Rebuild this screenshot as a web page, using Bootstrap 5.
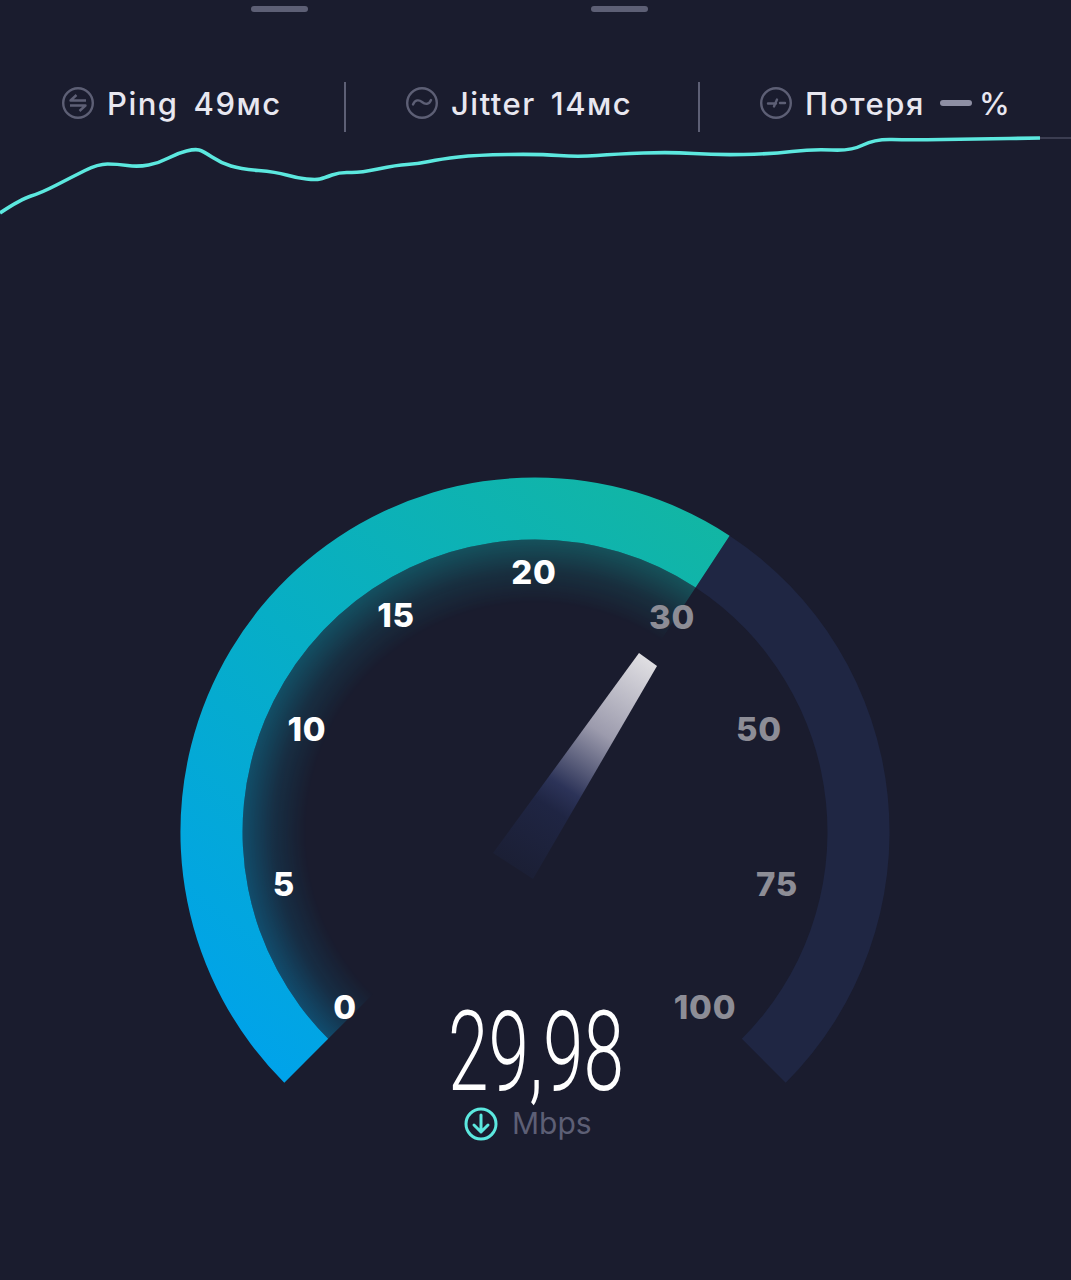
<!DOCTYPE html>
<html lang="ru">
<head>
    <meta charset="UTF-8">
    <meta name="viewport" content="width=device-width, initial-scale=1.0">
    <title>Speedtest</title>
    <link rel="stylesheet" href="https://cdn.jsdelivr.net/npm/bootstrap@5.3.0/dist/css/bootstrap.min.css">
    <style>
        html, body { background-color: #1a1c2e; height: 100%; }
        body { font-family: Inter, "Noto Sans", sans-serif; overflow: hidden; }
        .tela { width: 1071px; height: 1280px; background-color: #1a1c2e; }
        .alcas { padding: 6px 0 0 251px; gap: 283px; }
        .alca { width: 57px; height: 6px; border-radius: 3px; background-color: #5d5f75; }
        .stats { display: grid; grid-template-columns: 346px 354px 1fr; margin-top: 70px; height: 50px; }
        .stat { padding: 0 0 8px 62px; color: #e8e7f0; font-size: 31px; font-weight: 500; letter-spacing: 1.5px; line-height: 1; }
        .stat + .stat { padding-left: 60px; }
        .stat-div { border-right: 2px solid #5d5f75; }
        .stat svg { width: 32px; height: 32px; margin-right: 13px; flex: none; }
        .stat-val { margin-left: 15px; }
        .traco { width: 32px; height: 6px; border-radius: 3px; background-color: #8e8fa4; margin: 0 7px 0 15px; }
        .grafico { display: block; margin-top: -132px; }
        .medidor { display: block; }
        .num { font-family: Inter, sans-serif; font-size: 33px; font-weight: 800; letter-spacing: 0.8px; text-anchor: middle; }
        .num-on { fill: #ffffff; }
        .num-off { fill: #8d8d96; }
        .valor { font-family: Roboto, sans-serif; font-weight: 300; font-size: 112px; fill: #ffffff; }
        .unidade { font-family: Inter, sans-serif; font-size: 30px; fill: #5d5f75; }
    </style>
</head>
<body>
    <div class="tela position-relative">
        <div class="alcas d-flex">
            <div class="alca"></div>
            <div class="alca"></div>
        </div>

        <div class="stats">
            <div class="stat stat-div d-flex align-items-center">
                <svg viewBox="0 0 32 32" fill="none" stroke="#5d5f75" stroke-width="2.4">
                    <circle cx="16" cy="16" r="14.8"/>
                    <path d="M24 13.5H8.5l6-5.5M8 18.5h15.5l-6 5.5" stroke-linejoin="round"/>
                </svg>
                <span>Ping</span><span class="stat-val">49мс</span>
            </div>
            <div class="stat stat-div d-flex align-items-center">
                <svg viewBox="0 0 32 32" fill="none" stroke="#5d5f75" stroke-width="2.4">
                    <circle cx="16" cy="16" r="14.8"/>
                    <path d="M7 17.5c2-5 6-5 9-2.5s7 3 9-2" stroke-linecap="round"/>
                </svg>
                <span>Jitter</span><span class="stat-val">14мс</span>
            </div>
            <div class="stat d-flex align-items-center">
                <svg viewBox="0 0 32 32" fill="none" stroke="#5d5f75" stroke-width="2.4">
                    <circle cx="16" cy="16" r="14.8"/>
                    <path d="M8 16.5h8M17 12.5l-3 7M20 16h5" stroke-linecap="round"/>
                </svg>
                <span>Потеря</span><span class="traco"></span><span>%</span>
            </div>
        </div>

        <svg class="grafico" width="1071" height="240" viewBox="0 0 1071 240" fill="none">
            <path d="M1040 138H1071" stroke="#5d5f75" stroke-width="1"/>
            <path id="linhaGrafico" stroke="#5ce8df" stroke-width="3.6" stroke-linejoin="round"/>
        </svg>

        <svg class="medidor" width="1071" height="1040" viewBox="0 240 1071 1040">
            <defs>
                <linearGradient id="corArco" gradientUnits="userSpaceOnUse" x1="286" y1="1082" x2="730" y2="535">
                    <stop offset="0" stop-color="#00a3ea"/>
                    <stop offset="0.5" stop-color="#07aec6"/>
                    <stop offset="1" stop-color="#12b6a4"/>
                </linearGradient>
                <radialGradient id="brilho" gradientUnits="userSpaceOnUse" cx="535" cy="832" r="293">
                    <stop offset="0.78" stop-color="#fff" stop-opacity="0"/>
                    <stop offset="0.89" stop-color="#fff" stop-opacity="0.13"/>
                    <stop offset="1" stop-color="#fff" stop-opacity="0.36"/>
                </radialGradient>
                <mask id="mascaraBrilho" maskUnits="userSpaceOnUse" x="0" y="240" width="1071" height="1040">
                    <circle cx="535" cy="832" r="293" fill="url(#brilho)"/>
                </mask>
                <linearGradient id="corPonteiro" gradientUnits="userSpaceOnUse" x1="648" y1="660" x2="513" y2="866">
                    <stop offset="0" stop-color="#dfdee2"/>
                    <stop offset="0.35" stop-color="#9c9bad"/>
                    <stop offset="0.62" stop-color="#2c3358"/>
                    <stop offset="0.72" stop-color="#1f2543"/>
                    <stop offset="1" stop-color="#1b1f35"/>
                </linearGradient>
            </defs>

            <!-- arco de fundo -->
            <path d="M729.6 535.7A354.5 354.5 0 0 1 785.7 1082.7L741.8 1038.8A292.5 292.5 0 0 0 695.6 587.5Z" fill="#1f2643"/>
            <!-- brilho interno -->
            <path d="M328.2 1038.8A292.5 292.5 0 0 1 535 539.5A292.5 292.5 0 0 1 695.6 587.5L535 832Z" fill="url(#corArco)" mask="url(#mascaraBrilho)"/>
            <!-- arco preenchido -->
            <path d="M284.3 1082.7A354.5 354.5 0 0 1 535 477.5A354.5 354.5 0 0 1 729.6 535.7L695.6 587.5A292.5 292.5 0 0 0 535 539.5A292.5 292.5 0 0 0 328.2 1038.8Z" fill="url(#corArco)"/>

            <polygon points="639,653 657,666 533,879 493,853" fill="url(#corPonteiro)"/>

            <text class="num num-on" x="345" y="1019">0</text>
            <text class="num num-on" x="284" y="896">5</text>
            <text class="num num-on" x="307" y="741">10</text>
            <text class="num num-on" x="396" y="627">15</text>
            <text class="num num-on" x="534" y="584">20</text>
            <text class="num num-off" x="672" y="629">30</text>
            <text class="num num-off" x="759" y="741">50</text>
            <text class="num num-off" x="777" y="896">75</text>
            <text class="num num-off" x="705" y="1019">100</text>

            <text class="valor" x="536" y="1090" text-anchor="middle" textLength="176" lengthAdjust="spacingAndGlyphs">29,98</text>

            <g fill="none" stroke="#5ce8df" stroke-width="3" stroke-linecap="round" stroke-linejoin="round">
                <circle cx="481" cy="1124" r="15"/>
                <path d="M481 1115v17M474 1125l7 7 7-7"/>
            </g>
            <text class="unidade" x="512" y="1134">Mbps</text>
        </svg>
    </div>

    <script src="https://cdn.jsdelivr.net/npm/bootstrap@5.3.0/dist/js/bootstrap.bundle.min.js"></script>
    <script>
        // suaviza a linha do grafico passando pelos pontos medios
        const pontos = [[0,213],[21,199],[41,193],[72,177],[98,164],[117,164],[138,167],[159,163],[178,153],[195,149],[203,151],[221,163],[241,169],[276,172],[297,178],[316,180],[324,178],[340,172],[359,173],[397,165],[417,164],[441,159],[476,155],[540,154],[578,157],[616,154],[671,152],[716,155],[771,154],[813,149],[851,151],[875,139],[909,140],[978,139],[1040,138]];
        let d = `M${pontos[0][0]} ${pontos[0][1]}`;
        for (let i = 1; i < pontos.length - 1; i++) {
            const mx = (pontos[i][0] + pontos[i + 1][0]) / 2;
            const my = (pontos[i][1] + pontos[i + 1][1]) / 2;
            d += `Q${pontos[i][0]} ${pontos[i][1]} ${mx} ${my}`;
        }
        d += `L1040 138`;
        document.getElementById("linhaGrafico").setAttribute("d", d);
    </script>
</body>
</html>
